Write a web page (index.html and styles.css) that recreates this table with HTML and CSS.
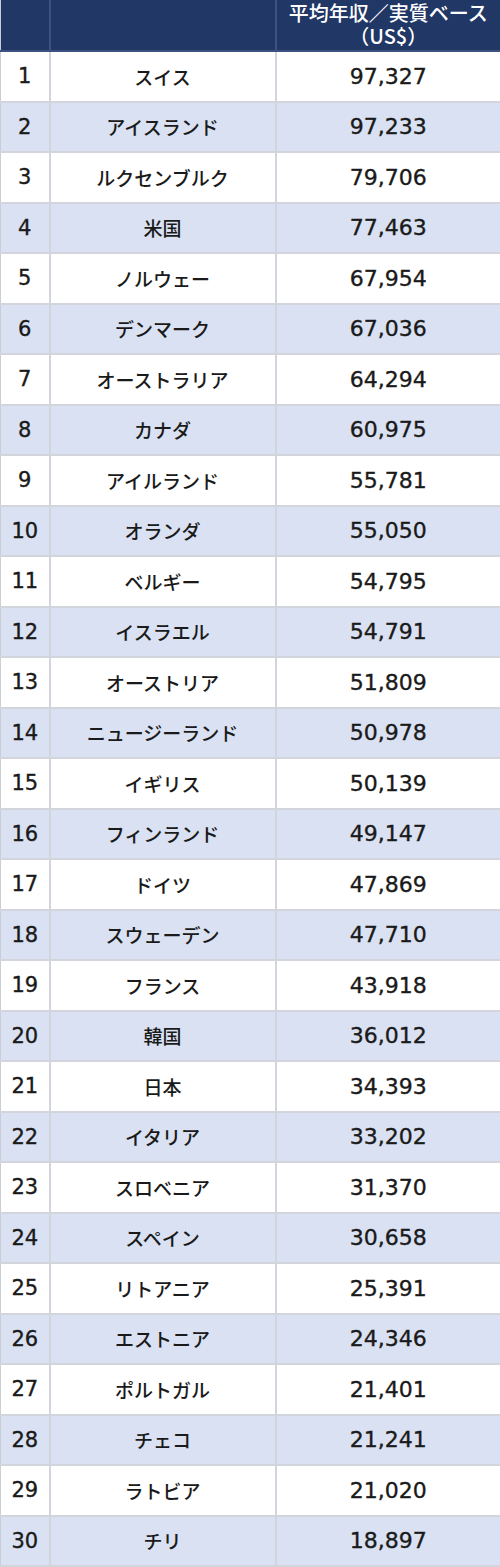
FILE: index.html
```html
<!DOCTYPE html>
<html lang="ja">
<head>
<meta charset="utf-8">
<link rel="stylesheet" href="styles.css">
</head>
<body>
<table class="rank">
<colgroup><col class="c1"><col class="c2"><col class="c3"></colgroup>
<thead>
<tr><th></th><th></th><th class="hd"><span class="hl">平均年収／実質ベース</span><span class="hl">（US$）</span></th></tr>
</thead>
<tbody>
<tr><td class="n">1</td><td class="j">スイス</td><td class="v">97,327</td></tr>
<tr class="alt"><td class="n">2</td><td class="j">アイスランド</td><td class="v">97,233</td></tr>
<tr><td class="n">3</td><td class="j">ルクセンブルク</td><td class="v">79,706</td></tr>
<tr class="alt"><td class="n">4</td><td class="j">米国</td><td class="v">77,463</td></tr>
<tr><td class="n">5</td><td class="j">ノルウェー</td><td class="v">67,954</td></tr>
<tr class="alt"><td class="n">6</td><td class="j">デンマーク</td><td class="v">67,036</td></tr>
<tr><td class="n">7</td><td class="j">オーストラリア</td><td class="v">64,294</td></tr>
<tr class="alt"><td class="n">8</td><td class="j">カナダ</td><td class="v">60,975</td></tr>
<tr><td class="n">9</td><td class="j">アイルランド</td><td class="v">55,781</td></tr>
<tr class="alt"><td class="n">10</td><td class="j">オランダ</td><td class="v">55,050</td></tr>
<tr><td class="n">11</td><td class="j">ベルギー</td><td class="v">54,795</td></tr>
<tr class="alt"><td class="n">12</td><td class="j">イスラエル</td><td class="v">54,791</td></tr>
<tr><td class="n">13</td><td class="j">オーストリア</td><td class="v">51,809</td></tr>
<tr class="alt"><td class="n">14</td><td class="j">ニュージーランド</td><td class="v">50,978</td></tr>
<tr><td class="n">15</td><td class="j">イギリス</td><td class="v">50,139</td></tr>
<tr class="alt"><td class="n">16</td><td class="j">フィンランド</td><td class="v">49,147</td></tr>
<tr><td class="n">17</td><td class="j">ドイツ</td><td class="v">47,869</td></tr>
<tr class="alt"><td class="n">18</td><td class="j">スウェーデン</td><td class="v">47,710</td></tr>
<tr><td class="n">19</td><td class="j">フランス</td><td class="v">43,918</td></tr>
<tr class="alt"><td class="n">20</td><td class="j">韓国</td><td class="v">36,012</td></tr>
<tr><td class="n">21</td><td class="j">日本</td><td class="v">34,393</td></tr>
<tr class="alt"><td class="n">22</td><td class="j">イタリア</td><td class="v">33,202</td></tr>
<tr><td class="n">23</td><td class="j">スロベニア</td><td class="v">31,370</td></tr>
<tr class="alt"><td class="n">24</td><td class="j">スペイン</td><td class="v">30,658</td></tr>
<tr><td class="n">25</td><td class="j">リトアニア</td><td class="v">25,391</td></tr>
<tr class="alt"><td class="n">26</td><td class="j">エストニア</td><td class="v">24,346</td></tr>
<tr><td class="n">27</td><td class="j">ポルトガル</td><td class="v">21,401</td></tr>
<tr class="alt"><td class="n">28</td><td class="j">チェコ</td><td class="v">21,241</td></tr>
<tr><td class="n">29</td><td class="j">ラトビア</td><td class="v">21,020</td></tr>
<tr class="alt"><td class="n">30</td><td class="j">チリ</td><td class="v">18,897</td></tr>
</tbody>
</table>
</body>
</html>
```
FILE: styles.css
```css
html, body {
  margin: 0;
  padding: 0;
  background: #ffffff;
}
body {
  font-family: "DejaVu Sans", "Noto Sans CJK JP", sans-serif;
  color: #1a1a1a;
}
.rank {
  width: 500px;
  border-collapse: collapse;
  table-layout: fixed;
}
.c1 { width: 49px; }
.c2 { width: 226px; }
.c3 { width: 225px; }
.rank th {
  background: #213766;
  color: #ffffff;
  height: 50px;
  padding: 0;
  border: 2px solid #3e5180;
  border-top: none;
  text-align: center;
  vertical-align: middle;
}
.rank th:first-child { border-left: 1px solid #c9cdd5; }
.rank th:last-child { border-right: 1px solid #c9cdd5; }
.hd {
  font-family: "Noto Sans CJK JP", sans-serif;
  font-weight: 500;
  font-size: 20px;
}
.hl {
  display: block;
  line-height: 23px;
  white-space: nowrap;
}
.hl:first-child { margin-top: -3px; }
.rank td {
  height: 48.5px;
  padding: 0;
  border: 2px solid #d2d5dc;
  text-align: center;
  vertical-align: middle;
}
.rank td:first-child { border-left: 1px solid #c9cdd5; }
.rank td:last-child { border-right: 1px solid #c9cdd5; }
.rank tbody tr:first-child td { border-top: none; }
.alt td { background: #d9e1f2; }
.n {
  font-size: 21px;
  -webkit-text-stroke: 0.35px #1a1a1a;
}
.j {
  font-family: "Noto Sans CJK JP", sans-serif;
  font-size: 19px;
  font-weight: 500;
}
.v {
  font-size: 22px;
  padding-right: 2px;
  -webkit-text-stroke: 0.35px #1a1a1a;
}
```
